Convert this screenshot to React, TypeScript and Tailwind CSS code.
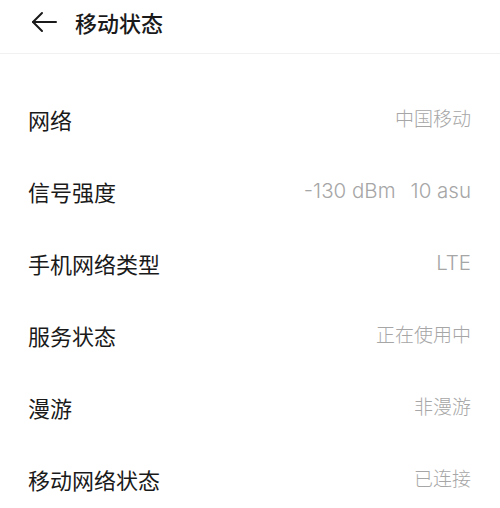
const rows: { label: string; value: string[]; latin?: boolean }[] = [
  { label: "网络", value: ["中国移动"] },
  { label: "信号强度", value: ["-130 dBm", "10 asu"], latin: true },
  { label: "手机网络类型", value: ["LTE"], latin: true },
  { label: "服务状态", value: ["正在使用中"] },
  { label: "漫游", value: ["非漫游"] },
  { label: "移动网络状态", value: ["已连接"] },
];

const BackArrow = () => (
  <svg width="26" height="22" viewBox="0 0 26 22" fill="none" stroke="#1a1a1a" strokeWidth="2" strokeLinecap="round" strokeLinejoin="round">
    <path d="M2 11H25" />
    <path d="M11 2L2 11L11 20" />
  </svg>
);

const App = () => {
  return (
    <div
      className="w-[500px] h-[508px] bg-white overflow-hidden"
      style={{ fontFamily: '"Noto Sans CJK SC", "Noto Sans", sans-serif' }}
    >
      <header className="h-[54px] pb-[9px] flex items-center border-b border-[#f1f1f1]">
        <div className="ml-[31px] flex items-center">
          <BackArrow />
        </div>
        <h1 className="ml-[18px] text-[22px] font-medium text-[#1a1a1a] leading-none">移动状态</h1>
      </header>
      <div className="pt-[29px]">
        {rows.map((row, index) => (
          <div key={index} className="h-[72px] flex items-center justify-between pl-[28px] pr-[29px]">
            <span className="text-[22px] text-[#1a1a1a] leading-none">{row.label}</span>
            <span
              className={
                row.latin
                  ? "flex gap-[15px] text-[20.5px] font-light text-[#a6a6a6] leading-none"
                  : "flex text-[19px] font-light text-[#a6a6a6] leading-none"
              }
              style={{ fontFamily: 'Inter, "Noto Sans CJK SC", sans-serif' }}
            >
              {row.value.map((v, i) => (
                <span key={i}>{v}</span>
              ))}
            </span>
          </div>
        ))}
      </div>
    </div>
  );
};

export default App;
